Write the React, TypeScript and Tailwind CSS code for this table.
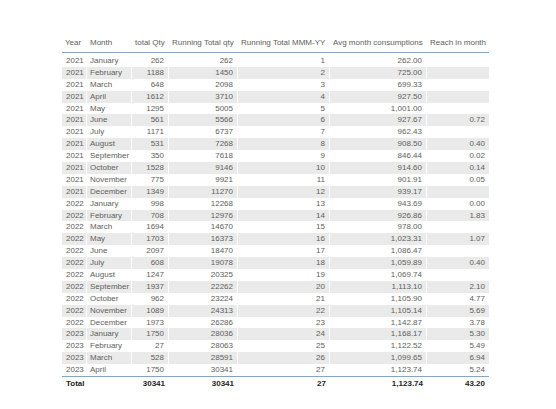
import React from "react";

type Row = [string, string, string, string, string, string, string];

// Year, Month, total Qty, Running Total qty, Running Total MMM-YY, Avg month consumptions, Reach in month
const rows: Row[] = [
  ["2021", "January", "262", "262", "1", "262.00", ""],
  ["2021", "February", "1188", "1450", "2", "725.00", ""],
  ["2021", "March", "648", "2098", "3", "699.33", ""],
  ["2021", "April", "1612", "3710", "4", "927.50", ""],
  ["2021", "May", "1295", "5005", "5", "1,001.00", ""],
  ["2021", "June", "561", "5566", "6", "927.67", "0.72"],
  ["2021", "July", "1171", "6737", "7", "962.43", ""],
  ["2021", "August", "531", "7268", "8", "908.50", "0.40"],
  ["2021", "September", "350", "7618", "9", "846.44", "0.02"],
  ["2021", "October", "1528", "9146", "10", "914.60", "0.14"],
  ["2021", "November", "775", "9921", "11", "901.91", "0.05"],
  ["2021", "December", "1349", "11270", "12", "939.17", ""],
  ["2022", "January", "998", "12268", "13", "943.69", "0.00"],
  ["2022", "February", "708", "12976", "14", "926.86", "1.83"],
  ["2022", "March", "1694", "14670", "15", "978.00", ""],
  ["2022", "May", "1703", "16373", "16", "1,023.31", "1.07"],
  ["2022", "June", "2097", "18470", "17", "1,086.47", ""],
  ["2022", "July", "608", "19078", "18", "1,059.89", "0.40"],
  ["2022", "August", "1247", "20325", "19", "1,069.74", ""],
  ["2022", "September", "1937", "22262", "20", "1,113.10", "2.10"],
  ["2022", "October", "962", "23224", "21", "1,105.90", "4.77"],
  ["2022", "November", "1089", "24313", "22", "1,105.14", "5.69"],
  ["2022", "December", "1973", "26286", "23", "1,142.87", "3.78"],
  ["2023", "January", "1750", "28036", "24", "1,168.17", "5.30"],
  ["2023", "February", "27", "28063", "25", "1,122.52", "5.49"],
  ["2023", "March", "528", "28591", "26", "1,099.65", "6.94"],
  ["2023", "April", "1750", "30341", "27", "1,123.74", "5.24"],
];

const headers = [
  "Year",
  "Month",
  "total Qty",
  "Running Total qty",
  "Running Total MMM-YY",
  "Avg month consumptions",
  "Reach in month",
];

const cols = "grid grid-cols-[25px_45px_37px_69px_92px_97px_62px]";

function cellAlign(i: number) {
  if (i === 1) return "justify-start pl-[3px]";
  if (i === 0) return "justify-start pl-[4px]";
  return "justify-end pr-[4px]";
}

export default function App() {
  return (
    <div
      className="w-[556px] h-[409px] bg-white pl-[62px] pt-[34px]"
      style={{ fontFamily: '"Liberation Sans", Arial, sans-serif' }}
    >
      <div className="w-[427px] text-[8px] leading-none text-[#605e5c]">
        {/* header */}
        <div className={`${cols} h-[19px] border-b border-[#74a9dd]`}>
          {headers.map((h, i) => (
            <div
              key={h}
              className={`flex items-center whitespace-nowrap ${i === 0 ? "pl-[3px]" : "pl-[3px]"}`}
            >
              {h}
            </div>
          ))}
        </div>

        {/* body */}
        <div className="mt-[2px]">
          {rows.map((r, ri) => (
            <div
              key={ri}
              className={`${cols} h-[11.9px] ${ri % 2 === 1 ? "bg-[#eaeaea]" : "bg-white"}`}
            >
              {r.map((c, ci) => (
                <div
                  key={ci}
                  className={`flex items-center whitespace-nowrap ${cellAlign(ci)} ${
                    ci < 6 ? "border-r border-white" : ""
                  }`}
                >
                  {c}
                </div>
              ))}
            </div>
          ))}
        </div>

        {/* total */}
        <div className={`${cols} h-[14px] border-t border-[#74a9dd] font-bold text-[#252423]`}>
          <div className="flex items-center pl-[4px] col-span-2">Total</div>
          <div className="flex items-center justify-end pr-[4px]">30341</div>
          <div className="flex items-center justify-end pr-[4px]">30341</div>
          <div className="flex items-center justify-end pr-[4px]">27</div>
          <div className="flex items-center justify-end pr-[4px]">1,123.74</div>
          <div className="flex items-center justify-end pr-[4px]">43.20</div>
        </div>
      </div>
    </div>
  );
}
